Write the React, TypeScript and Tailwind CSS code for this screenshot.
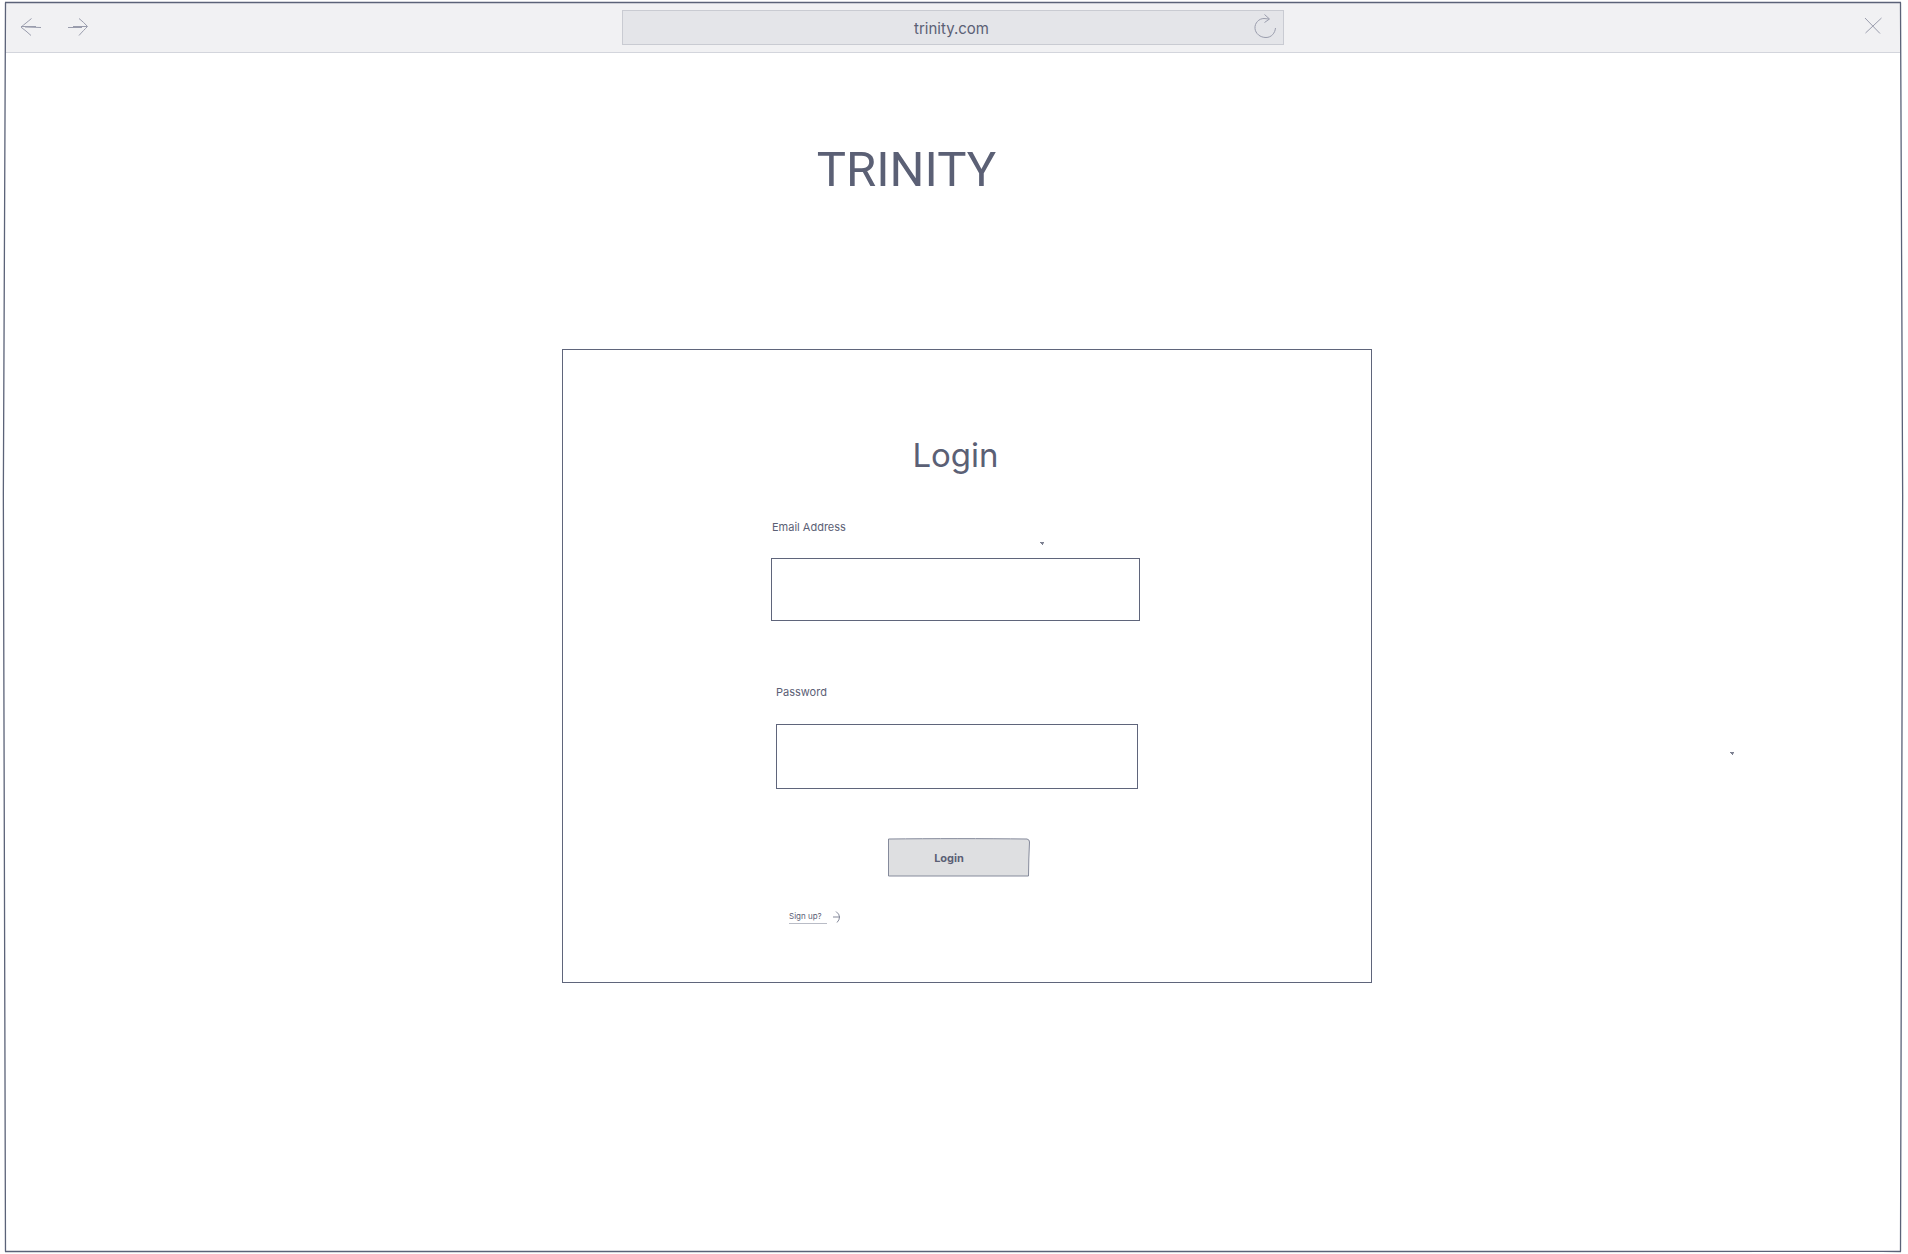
import React from "react";

const line = { fill: "none", stroke: "#9a9dad", strokeWidth: 1 } as const;

function BackIcon() {
  return (
    <svg width="22" height="20" viewBox="0 0 22 20" {...line} aria-hidden="true">
      <path d="M11.5 1.5 C8 4.500 4 7.500 1 10.200 C4 12.500 8 15.500 11 18.500" />
      <path d="M1 9.500 L16 9.500 M5 10 L21 10.500" />
    </svg>
  );
}

function ForwardIcon() {
  return (
    <svg width="22" height="20" viewBox="0 0 22 20" {...line} aria-hidden="true">
      <path d="M11 1.500 C14 4 17 6.500 19.500 9.500 C17 12 14 15 11 18.500" />
      <path d="M0 10.500 L14 10.500 M5 9.500 L19 9.500" />
    </svg>
  );
}

function ReloadIcon() {
  return (
    <svg width="24" height="26" viewBox="0 0 24 26" {...line} aria-hidden="true">
      <path d="M21.500 14 C21 19 17.500 23.500 12 23.500 C6 23.500 1.500 19.500 1 14.500 C0.500 9 5 4.500 10 4.500 L15 5" />
      <path d="M10.500 0.500 L15.500 5 L10.500 8.500" />
    </svg>
  );
}

function CloseIcon() {
  return (
    <svg width="18" height="18" viewBox="0 0 18 18" {...line} aria-hidden="true">
      <path d="M1 1 L16 16.500 M17.500 1 L1.500 16" />
    </svg>
  );
}

function Speck() {
  return (
    <svg width="4" height="3" viewBox="0 0 4 3" fill="none" stroke="#5b6075" aria-hidden="true">
      <path d="M0 0.500 H4 M1 1.500 H3.500 M2 2.500 H3" strokeWidth="0.800" />
    </svg>
  );
}

function Frame() {
  return (
    <svg
      className="pointer-events-none absolute inset-0 size-full"
      viewBox="0 0 1908 1254"
      preserveAspectRatio="none"
      fill="none"
      stroke="#5b6278"
      strokeWidth="1.300"
      aria-hidden="true"
    >
      <path d="M5 2.500 C600 1 1200 1 1901 2.500" vectorEffect="non-scaling-stroke" />
      <path d="M1900.500 2.500 C1903.500 420 1903.500 830 1900.500 1251.500" vectorEffect="non-scaling-stroke" />
      <path d="M1901 1251.500 C1300 1250.500 700 1252.500 5 1251.500" vectorEffect="non-scaling-stroke" />
      <path d="M5.500 1251.500 C2.500 830 2.500 420 5.500 2.500" vectorEffect="non-scaling-stroke" />
    </svg>
  );
}

export default function App() {
  return (
    <div className="relative flex min-h-screen flex-col bg-white pt-[3px] pr-2 pl-[5px] font-['Inter',sans-serif] text-[#5b6075]">
      <header className="grid h-[50px] grid-cols-[1fr_minmax(0,662px)_1fr] items-center border-b border-l border-[#d3d5dc] bg-[#f1f1f3]">
        <nav className="flex gap-[26px] pb-px pl-[14px]" aria-label="History">
          <button type="button" aria-label="Back">
            <BackIcon />
          </button>
          <button type="button" aria-label="Forward">
            <ForwardIcon />
          </button>
        </nav>
        <div className="relative h-[35px]">
          <input
            type="text"
            aria-label="Address"
            defaultValue="trinity.com"
            className="size-full border border-[#c9cbd2] bg-[#e4e5e9] pt-px pr-[3px] text-center text-[15px] outline-none"
          />
          <button type="button" aria-label="Reload" className="absolute top-1 right-[6px]">
            <ReloadIcon />
          </button>
        </div>
        <button type="button" aria-label="Close" className="mr-[18px] mb-[3px] justify-self-end">
          <CloseIcon />
        </button>
      </header>

      <main className="flex flex-col items-center">
        <h1 className="mt-[89px] pr-[92px] font-['Roboto',sans-serif] text-[49px] leading-[56px]">TRINITY</h1>

        <div className="w-full pl-[29px]">
          <section className="mx-auto mt-[151px] h-[634px] w-full max-w-[810px] border border-[#5f657b] pt-[85px] pl-[208px]">
            <form className="flex w-[369px] flex-col" onSubmit={(e) => e.preventDefault()}>
              <h2 className="text-center text-[33px] leading-[40px]">Login</h2>

              <label htmlFor="email" className="mt-[44px] pl-px text-[11px] leading-4">
                Email Address
              </label>
              <div className="relative mt-[23px]">
                <input
                  id="email"
                  type="email"
                  className="block h-[63px] w-full border border-[#5f657b] px-3 text-base outline-none"
                />
                <span className="absolute top-[-16px] right-[96px]">
                  <Speck />
                </span>
              </div>

              <div className="mt-[63px] flex flex-col pr-[2px] pl-[5px]">
                <label htmlFor="password" className="text-[11px] leading-4">
                  Password
                </label>
                <input
                  id="password"
                  type="password"
                  className="mt-6 h-[65px] w-full border border-[#5f657b] px-3 text-base outline-none"
                />
              </div>

              <button
                type="submit"
                className="relative mt-[49px] ml-[117px] h-[39px] w-[142px] pr-5 text-[11px] leading-4 font-bold"
              >
                <svg
                  className="absolute inset-0 size-full"
                  viewBox="0 0 142 39"
                  fill="#dedfe1"
                  stroke="#858a9b"
                  aria-hidden="true"
                >
                  <path d="M0.500 1 C45 0.500 95 0.500 139 1 Q141.500 1.500 141.500 4 C141 15 140.500 27 140.500 38 L0.500 38 Z" />
                </svg>
                <span className="relative">Login</span>
              </button>

              <a href="#signup" className="mt-8 ml-[18px] flex items-center gap-[6px] self-start text-[8px]">
                <span className="w-[38px] border-b border-[#b9bcc6] leading-[14px]">Sign up?</span>
                <svg width="8" height="12" viewBox="0 0 8 12" fill="none" stroke="#85899a" aria-hidden="true">
                  <path d="M0 6 H7 M3 0.500 Q6.500 3 6.500 6 Q6.500 9 4 11.500" />
                </svg>
              </a>
            </form>
          </section>
        </div>
      </main>

      <span className="absolute top-[752px] right-[174px]">
        <Speck />
      </span>
      <Frame />
    </div>
  );
}
